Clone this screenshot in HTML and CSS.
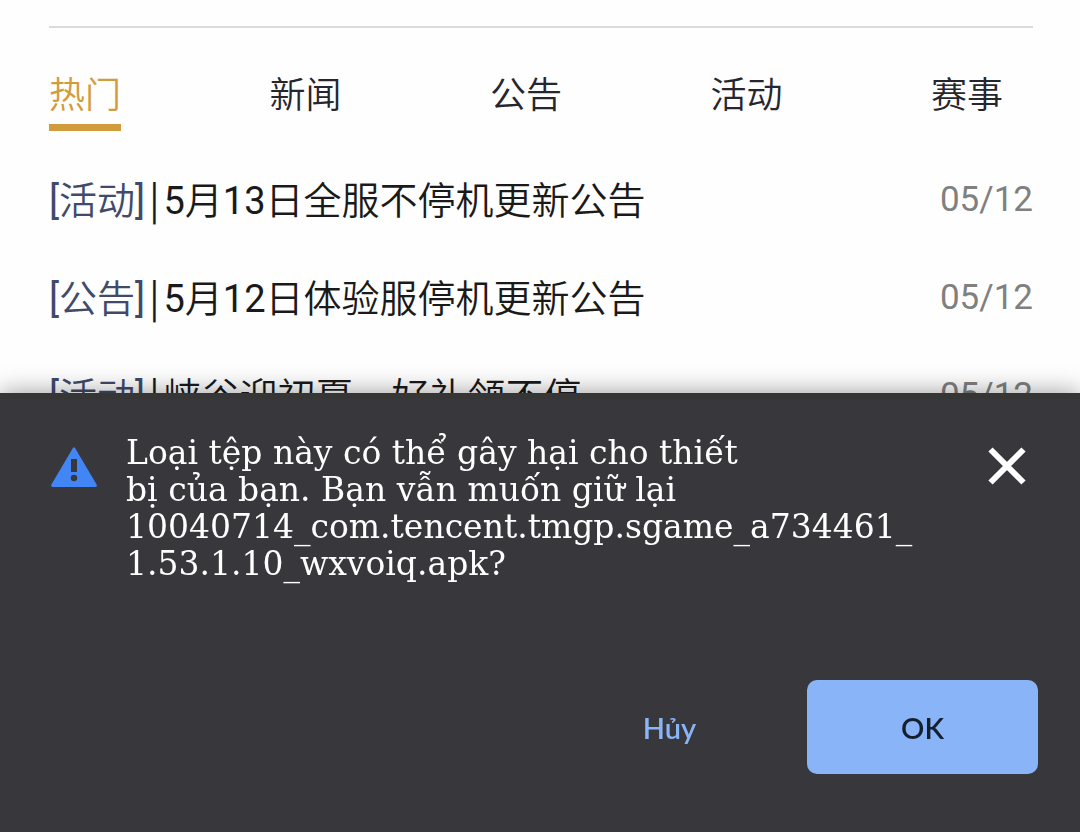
FILE: index.html
```html
<!doctype html>
<html lang="vi">
    <head>
        <meta charset="utf-8">
        <meta name="viewport" content="width=device-width, initial-scale=1">
        <title>新闻</title>
        <link rel="stylesheet" href="styles.css">
    </head>

    <body>
        <main class="news" lang="zh-CN">
            <nav class="tabs">
                <a class="tab active" href="#hot">热门</a>
                <a class="tab" href="#news">新闻</a>
                <a class="tab" href="#notice">公告</a>
                <a class="tab" href="#events">活动</a>
                <a class="tab" href="#matches">赛事</a>
            </nav>
            <ul class="news-list">
                <li>
                    <a href="#n1"><span class="tag">[活动]</span><span class="bar">|</span>5月13日全服不停机更新公告</a>
                    <time>05/12</time>
                </li>
                <li>
                    <a href="#n2"><span class="tag">[公告]</span><span class="bar">|</span>5月12日体验服停机更新公告</a>
                    <time>05/12</time>
                </li>
                <li>
                    <a href="#n3"><span class="tag">[活动]</span><span class="bar">|</span>峡谷迎初夏，好礼领不停</a>
                    <time>05/12</time>
                </li>
            </ul>
        </main>

        <section class="infobar" role="alertdialog" aria-labelledby="message">
            <div class="infobar-body">
                <svg class="warning" viewBox="0 0 46 40" aria-hidden="true">
                    <path fill="#4285f4" d="M21.8 1.2Q23 -.8 24.2 1.2L45.6 37.6Q46.6 40 44.4 40H1.6Q-.6 40 .4 37.6Z" />
                    <path fill="#38373b" d="M20 12h6v13h-6z" />
                    <circle fill="#38373b" cx="23" cy="31" r="3.2" />
                </svg>
                <p class="message" id="message">
                    Loại tệp này có thể gây hại cho thiết<br>
                    bị của bạn. Bạn vẫn muốn giữ lại<br>
                    10040714_com.tencent.tmgp.sgame_a734461_<br>
                    1.53.1.10_wxvoiq.apk?
                </p>
                <button class="close" type="button" aria-label="Đóng">
                    <svg viewBox="0 0 38 38" aria-hidden="true">
                        <path d="M2.5 2.5l33 33M35.5 2.5l-33 33" stroke="#fff" stroke-width="6" />
                    </svg>
                </button>
            </div>
            <div class="actions">
                <button class="btn" type="button">Hủy</button>
                <button class="btn primary" type="button">OK</button>
            </div>
        </section>
    </body>
</html>
```
FILE: styles.css
```css
* {
    box-sizing: border-box;
}
body {
    margin: 0;
    height: 100vh;
    overflow: hidden;
    background: #fefefe;
    font-family: Roboto, 'Noto Sans CJK SC DemiLight', 'Noto Sans CJK SC', sans-serif;
}
a {
    color: inherit;
    text-decoration: none;
}
button {
    border: none;
    padding: 0;
    background: none;
    cursor: pointer;
}

.news {
    margin: 26px 47px 0 49px;
    border-top: 2px solid #d8dcde;
}
.tabs {
    display: flex;
    justify-content: space-between;
    padding: 40px 30px 0 0;
    font-size: 36px;
    line-height: 56px;
    font-weight: 350;
    color: #26262f;
}
.tab {
    border-bottom: 7px solid transparent;
}
.tab.active {
    color: #d29b3c;
    border-color: #d29b3c;
}
.news-list {
    list-style: none;
    margin: 20px 0 0;
    padding: 0;
}
.news-list li {
    display: flex;
    justify-content: space-between;
    height: 98px;
    font-size: 38px;
    line-height: 94px;
    color: #1a1a1a;
    white-space: nowrap;
}
.news-list .tag {
    color: #414a6b;
}
.news-list .bar {
    padding: 0 4px;
    font-family: 'Noto Sans CJK SC', sans-serif;
}
.news-list time {
    font-size: 35px;
    line-height: 98px;
    color: #808080;
}

.infobar {
    position: fixed;
    left: 0;
    right: 0;
    bottom: 0;
    padding: 35px 42px 58px 51px;
    background: #38373b;
    border-top: 6px solid #363636;
    box-shadow: 0 0 24px rgba(0, 0, 0, 0.4);
}
.infobar-body {
    display: flex;
    align-items: flex-start;
}
.warning {
    flex: none;
    width: 46px;
    height: 40px;
    margin-top: 13px;
}
.message {
    flex: 1;
    margin: 0 0 0 29px;
    font-family: 'DejaVu Serif', serif;
    font-size: 33px;
    line-height: 37px;
    color: #fff;
    white-space: nowrap;
}
.close {
    flex: none;
    width: 38px;
    height: 38px;
    margin: 13px 12px 0 0;
}
.close svg {
    display: block;
}
.actions {
    display: flex;
    justify-content: flex-end;
    margin-top: 98px;
}
.btn {
    min-width: 231px;
    height: 94px;
    border-radius: 10px;
    font-family: Lato, sans-serif;
    font-size: 29px;
    font-weight: 600;
    color: #8ab4f8;
}
.btn + .btn {
    margin-left: 22px;
}
.btn.primary {
    background: #8ab4f8;
    color: #15202f;
}
```
